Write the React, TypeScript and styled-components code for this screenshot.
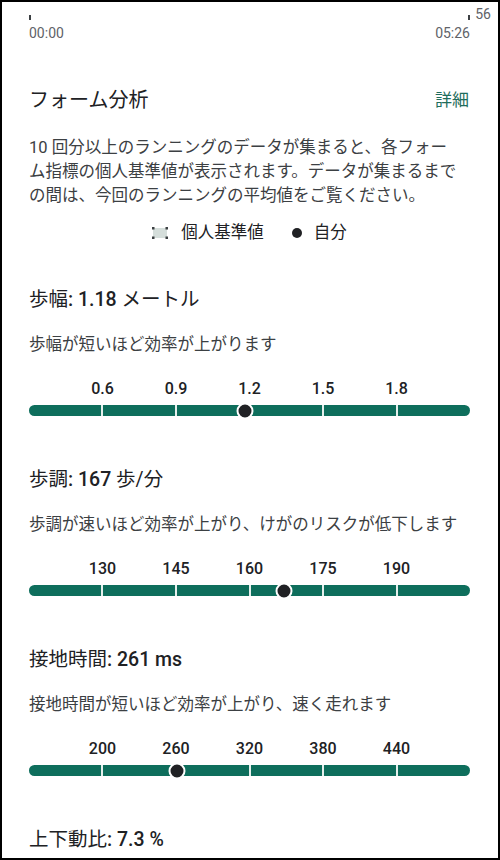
import React from "react";
import styled, { createGlobalStyle } from "styled-components";

const GlobalStyle = createGlobalStyle`
  html, body {
    margin: 0;
    padding: 0;
    background: #ffffff;
  }
  body {
    font-family: Roboto, "Noto Sans CJK JP", sans-serif;
    color: #202124;
  }
  * {
    box-sizing: border-box;
  }
`;

const GREEN = "#0e6e5c";

const Page = styled.div`
  position: relative;
  width: 500px;
  height: 860px;
  overflow: hidden;
  border: 2px solid #000;
  padding: 0 28px 0 27px;
  background: #fff;
`;

const TimeAxis = styled.div`
  display: flex;
  justify-content: space-between;
  padding-top: 13px;
`;

const TimeMark = styled.div<{ $align: "left" | "right" }>`
  display: flex;
  flex-direction: column;
  align-items: ${(p) => (p.$align === "left" ? "flex-start" : "flex-end")};
`;

const Tick = styled.span`
  display: block;
  width: 2px;
  height: 5px;
  background: #3c4043;
`;

const TimeLabel = styled.span`
  margin-top: 5px;
  font-size: 14px;
  line-height: 16px;
  color: #5f6368;
`;

const MaxLabel = styled.span`
  position: absolute;
  top: 5px;
  right: 7px;
  font-size: 14px;
  line-height: 14px;
  color: #5f6368;
`;

const Header = styled.div`
  display: flex;
  justify-content: space-between;
  align-items: center;
  margin-top: 45px;
`;

const Heading = styled.h2`
  margin: 0;
  font-size: 20px;
  line-height: 28px;
  font-weight: 400;
  color: #202124;
`;

const DetailLink = styled.a`
  font-size: 17px;
  line-height: 28px;
  color: #1f6d5c;
  text-decoration: none;
  margin-right: 1px;
`;

const Intro = styled.p`
  max-width: 430px;
  margin: 22px 0 0;
  font-size: 16.5px;
  line-height: 24px;
  color: #3c4043;
`;

const Legend = styled.div`
  display: flex;
  justify-content: center;
  align-items: center;
  gap: 28px;
  margin-top: 13px;
  font-size: 16.5px;
  line-height: 24px;
  color: #202124;
`;

const LegendItem = styled.div<{ $gap: number }>`
  display: flex;
  align-items: center;
  gap: ${(p) => p.$gap}px;
`;

const LegendDot = styled.span`
  width: 10px;
  height: 10px;
  border-radius: 50%;
  background: #202124;
`;

const Section = styled.section<{ $first?: boolean }>`
  margin-top: ${(p) => (p.$first ? 42 : 51)}px;
`;

const MetricTitle = styled.h3`
  margin: 0;
  font-size: 19.5px;
  line-height: 26px;
  font-weight: 400;
  color: #202124;
`;

const MetricValue = styled.span`
  font-weight: 500;
`;

const MetricNote = styled.p`
  margin: 20px 0 0;
  font-size: 16.5px;
  line-height: 24px;
  color: #3c4043;
`;

const ScaleLabels = styled.div`
  display: grid;
  grid-template-columns: repeat(6, 1fr);
  margin-top: 22px;
`;

const ScaleLabel = styled.span<{ $col: number }>`
  grid-row: 1;
  grid-column: ${(p) => p.$col} / span 2;
  text-align: center;
  font-size: 16px;
  line-height: 20px;
  font-weight: 500;
  color: #202124;
`;

const TrackWrap = styled.div`
  position: relative;
  margin-top: 6px;
`;

const Track = styled.div`
  display: grid;
  grid-template-columns: repeat(6, 1fr);
  gap: 2px;
  height: 11px;
  border-radius: 6px;
  overflow: hidden;
  background: #e6f0ed;
`;

const Segment = styled.span`
  background: ${GREEN};
`;

const Marker = styled.span`
  position: absolute;
  top: 50%;
  width: 17px;
  height: 17px;
  border-radius: 50%;
  background: #202124;
  border: 2px solid #fff;
  transform: translate(-50%, -50%);
`;

function BaselineIcon() {
  return (
    <svg width="16" height="12" viewBox="0 0 16 12">
      <rect x="1" y="1" width="14" height="10" fill="#d5dedb" />
      <rect x="0" y="0" width="2.5" height="2.5" fill="#3c4043" />
      <rect x="13.5" y="0" width="2.5" height="2.5" fill="#3c4043" />
      <rect x="0" y="9.5" width="2.5" height="2.5" fill="#3c4043" />
      <rect x="13.5" y="9.5" width="2.5" height="2.5" fill="#3c4043" />
    </svg>
  );
}

type Metric = {
  label: string;
  value: string;
  unit: string;
  note: string;
  start: number;
  step: number;
  current: number;
  decimals: number;
};

const metrics: Metric[] = [
  {
    label: "歩幅",
    value: "1.18",
    unit: "メートル",
    note: "歩幅が短いほど効率が上がります",
    start: 0.3,
    step: 0.3,
    current: 1.18,
    decimals: 1,
  },
  {
    label: "歩調",
    value: "167",
    unit: "歩/分",
    note: "歩調が速いほど効率が上がり、けがのリスクが低下します",
    start: 115,
    step: 15,
    current: 167,
    decimals: 0,
  },
  {
    label: "接地時間",
    value: "261 ms",
    unit: "",
    note: "接地時間が短いほど効率が上がり、速く走れます",
    start: 140,
    step: 60,
    current: 261,
    decimals: 0,
  },
];

function MetricScale({ m }: { m: Metric }) {
  const pct = ((m.current - m.start) / (m.step * 6)) * 100;
  return (
    <>
      <ScaleLabels>
        {[1, 2, 3, 4, 5].map((i) => (
          <ScaleLabel key={i} $col={i}>
            {(m.start + m.step * i).toFixed(m.decimals)}
          </ScaleLabel>
        ))}
      </ScaleLabels>
      <TrackWrap>
        <Track>
          {[0, 1, 2, 3, 4, 5].map((i) => (
            <Segment key={i} />
          ))}
        </Track>
        <Marker style={{ left: `${pct}%` }} />
      </TrackWrap>
    </>
  );
}

export default function App() {
  return (
    <>
      <GlobalStyle />
      <Page>
        <TimeAxis>
          <TimeMark $align="left">
            <Tick />
            <TimeLabel>00:00</TimeLabel>
          </TimeMark>
          <TimeMark $align="right">
            <Tick />
            <TimeLabel>05:26</TimeLabel>
          </TimeMark>
        </TimeAxis>
        <MaxLabel>56</MaxLabel>

        <Header>
          <Heading>フォーム分析</Heading>
          <DetailLink href="#">詳細</DetailLink>
        </Header>

        <Intro>
          10 回分以上のランニングのデータが集まると、各フォーム指標の個人基準値が表示されます。データが集まるまでの間は、今回のランニングの平均値をご覧ください。
        </Intro>

        <Legend>
          <LegendItem $gap={13}>
            <BaselineIcon />
            <span>個人基準値</span>
          </LegendItem>
          <LegendItem $gap={12}>
            <LegendDot />
            <span>自分</span>
          </LegendItem>
        </Legend>

        {metrics.map((m, i) => (
          <Section key={m.label} $first={i === 0}>
            <MetricTitle>
              {m.label}
              <MetricValue>: {m.value}</MetricValue>
              {m.unit && ` ${m.unit}`}
            </MetricTitle>
            <MetricNote>{m.note}</MetricNote>
            <MetricScale m={m} />
          </Section>
        ))}

        <Section>
          <MetricTitle>
            上下動比<MetricValue>: 7.3 %</MetricValue>
          </MetricTitle>
        </Section>
      </Page>
    </>
  );
}
